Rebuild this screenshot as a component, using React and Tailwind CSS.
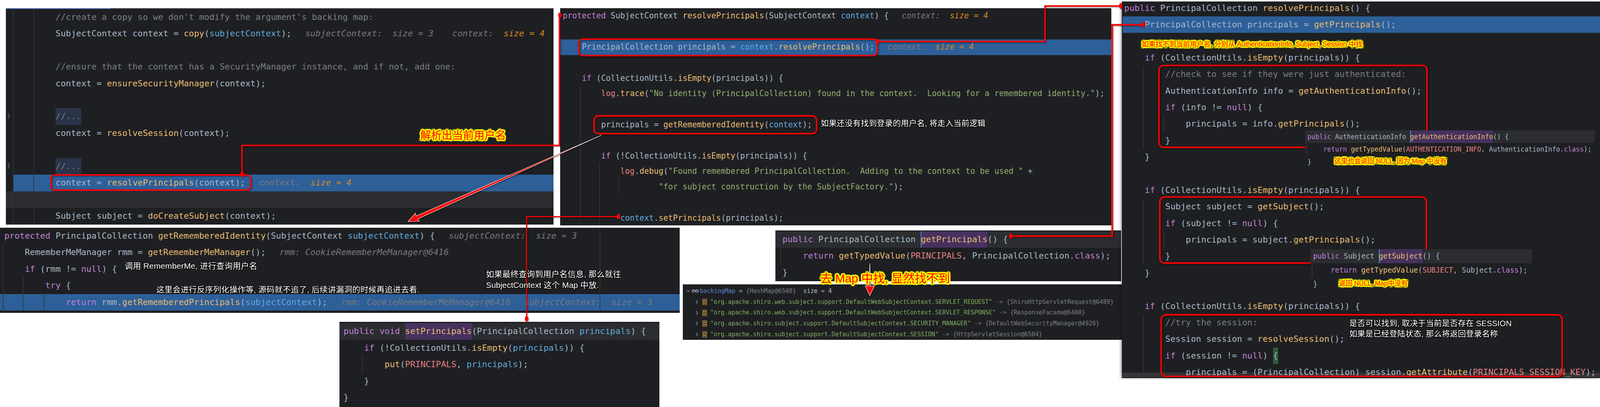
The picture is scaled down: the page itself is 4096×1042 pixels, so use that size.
import React from "react";
import { ChevronDown, ChevronRight } from "lucide-react";

// Screenshot collage of IDE snippets with red call arrows and notes.
// Drawing overlay uses the reference's own pixel coordinates (viewBox 7479x1903).

const KEYWORDS = new Set(["public", "protected", "void", "if", "return", "try", "null", "class"]);
const TOKEN = /("[^"]*"?)|(\/\/.*)|~([^~]*)~|\^([^^]*)\^|\|([^|]*)\||#([^#]*)#|&([^&]*)&|%([^%]*)%|@([^@]*)@|([A-Za-z_]\w*)|([^A-Za-z_"\/~^|#&%@]+|.)/g;

function tokens(text) {
  const out = [];
  let m;
  let i = 0;
  TOKEN.lastIndex = 0;
  while ((m = TOKEN.exec(text))) {
    const key = i++;
    if (m[1]) out.push(<span key={key} className="text-[#8fae6f]">{m[1]}</span>);
    else if (m[2]) out.push(<span key={key} className="text-[#7a7e85]">{m[2]}</span>);
    else if (m[3] !== undefined) out.push(<span key={key} className="text-[#5fa8dc]">{m[3]}</span>);
    else if (m[4] !== undefined) out.push(<span key={key} className="ml-[0.7ch] italic text-[#787a7e]">{m[4]}</span>);
    else if (m[5] !== undefined) out.push(<span key={key} className="italic text-[#d68a1e]">{m[5]}</span>);
    else if (m[6] !== undefined) out.push(<span key={key} className="inline-block h-[1lh] align-top bg-[#46315f] text-[#e8bb72] shadow-[inset_2px_0_0_#4a90d9]">{m[6]}</span>);
    else if (m[7] !== undefined) out.push(<span key={key} className="inline-block h-[1lh] align-top bg-[#46315f] text-[#e8bb72]">{m[7]}</span>);
    else if (m[8] !== undefined) out.push(<span key={key} className="inline-block h-[1lh] align-top bg-[#2a3349] text-[#7a7e85]">{m[8]}</span>);
    else if (m[9] !== undefined) out.push(<span key={key} className="inline-block h-[1lh] align-top bg-[#2f5a3f]">{m[9]}</span>);
    else if (m[10]) {
      const word = m[10];
      const next = text[m.index + word.length];
      if (KEYWORDS.has(word)) out.push(<span key={key} className="text-[#c07fd6]">{word}</span>);
      else if (next === "(") out.push(<span key={key} className="text-[#e8bb72]">{word}</span>);
      else if (word === "log" || /^[A-Z_]{3,}$/.test(word)) out.push(<span key={key} className="text-[#e57f80]">{word}</span>);
      else out.push(word);
    } else out.push(m[11]);
  }
  return out;
}

function L({ t = "", className = "" }) {
  return <div className={`h-[1lh] whitespace-pre ${className}`}>{tokens(t)}</div>;
}

const HL = "bg-[#2d5f99]";

function EntryIcon() {
  return (
    <svg width="12" height="16" viewBox="0 0 12 16" fill="none" stroke="#d9a441" strokeWidth="1.2" className="shrink-0">
      <rect x="0.8" y="0.8" width="10.4" height="3.6" rx="1" />
      <rect x="0.8" y="6.2" width="10.4" height="3.6" rx="1" />
      <rect x="0.8" y="11.6" width="10.4" height="3.6" rx="1" />
    </svg>
  );
}

function WatchIcon() {
  return (
    <svg width="19" height="8" viewBox="0 0 19 8" fill="none" stroke="#a3b1b8" strokeWidth="1.6" className="shrink-0">
      <circle cx="5" cy="4.2" r="3.2" />
      <circle cx="14" cy="4.2" r="3.2" />
      <path d="M1.4 3 Q5 0.6 9.5 2.6 Q14 0.6 17.6 3" />
    </svg>
  );
}

function DebugRow({ name, value }) {
  return (
    <div className="flex h-[27.7px] items-center whitespace-pre pl-[27px]">
      <ChevronRight size={18} strokeWidth={1.8} className="shrink-0 text-[#9a9da3]" />
      <span className="w-[5px] shrink-0" />
      <EntryIcon />
      <span className="ml-[7.7px] text-[#7fa860]">{name}</span>
      <span className="text-[#7a7e85]"> -&gt; {value}</span>
    </div>
  );
}

function Note({ className = "", children }) {
  return <div className={`absolute whitespace-pre leading-none [font-family:'Liberation_Sans','Noto_Sans_CJK_SC',sans-serif] ${className}`}>{children}</div>;
}

// halo around the note text, painted with offset shadows
const YELLOW = "text-[#ff0000] [text-shadow:4px_0_1px_#ff0,-4px_0_1px_#ff0,0_4px_1px_#ff0,0_-4px_1px_#ff0,3px_3px_1px_#ff0,-3px_3px_1px_#ff0,3px_-3px_1px_#ff0,-3px_-3px_1px_#ff0,2px_0_0_#ff0,-2px_0_0_#ff0,0_2px_0_#ff0,0_-2px_0_#ff0]";
const WHITE = "text-white [text-shadow:1.5px_0_0_#000,-1.5px_0_0_#000,0_1.5px_0_#000,0_-1.5px_0_#000,1.2px_1.2px_0_#000,-1.2px_1.2px_0_#000,1.2px_-1.2px_0_#000,-1.2px_-1.2px_0_#000]";

export default function App() {
  return (
    <div className="relative h-[1042px] w-[4096px] overflow-hidden bg-white text-[#a9b7c6] [font-family:'DejaVu_Sans_Mono','Noto_Sans_CJK_SC',monospace]">
      {/* SecurityManager createSubject */}
      <div className="absolute left-[15.3px] top-[20.8px] h-[554.3px] w-[1401.7px] overflow-hidden bg-[#1e1f22] text-[21.8px] leading-[42.45px] [&>div]:pl-[127px]">
        <div className="flex h-[2px] !pl-0">
          <div className="w-[268px] bg-[#4a6fb5]" />
          <div className="flex-1 bg-[#3c3f41]" />
        </div>
        <L t="//create a copy so we don't modify the argument's backing map:" />
        <L t="SubjectContext context = copy(~subjectContext~);  ^subjectContext:  size = 3^   ^context:^  |size = 4|" />
        <L />
        <L t="//ensure that the context has a SecurityManager instance, and if not, add one:" />
        <L t="context = ensureSecurityManager(context);" />
        <L />
        <L t="%//...%" />
        <L t="context = resolveSession(context);" />
        <L />
        <L t="%//...%" />
        <L className={`${HL} ml-[19px] !pl-[108px]`} t="context = resolvePrincipals(context);  ^context:^  |size = 4|" />
        <L className="bg-[#2b2d30]" />
        <L t="Subject subject = doCreateSubject(context);" />
      </div>

      {/* resolvePrincipals(SubjectContext) */}
      <div className="absolute left-[1433.9px] top-[21.4px] h-[555.4px] w-[1410.9px] overflow-hidden bg-[#1e1f22] text-[20.4px] leading-[39.8px] [&>div]:pl-[6.6px]">
        <L t="protected SubjectContext resolvePrincipals(SubjectContext ~context~) {  ^context:^  |size = 4|" />
        <L />
        <L className={HL} t="    PrincipalCollection principals = ~context~.resolvePrincipals();  ^context:^  |size = 4|" />
        <L />
        <L t="    if (CollectionUtils.isEmpty(principals)) {" />
        <L t='        log.trace("No identity (PrincipalCollection) found in the context.  Looking for a remembered identity.");' />
        <L />
        <L t="        principals = getRememberedIdentity(~context~);" />
        <L />
        <L t="        if (!CollectionUtils.isEmpty(principals)) {" />
        <L t={'            log.debug("Found remembered PrincipalCollection.  Adding to the context to be used " +'} />
        <L t={'                    "for subject construction by the SubjectFactory.");'} />
        <L />
        <L t="            ~context~.setPrincipals(principals);" />
      </div>

      {/* getRememberedIdentity */}
      <div className="absolute left-0 top-[582.7px] h-[218px] w-[1740px] overflow-hidden bg-[#1e1f22] text-[21.8px] leading-[42.5px] [&>div]:pl-[11px]">
        <L t="protected PrincipalCollection getRememberedIdentity(SubjectContext ~subjectContext~) {  ^subjectContext:  size = 3^" />
        <L t="    RememberMeManager rmm = getRememberMeManager();  ^rmm: CookieRememberMeManager@6416^" />
        <L t="    if (rmm != null) {" />
        <L t="        try {" />
        <L className={HL} t="            return rmm.getRememberedPrincipals(~subjectContext~);  ^rmm: CookieRememberMeManager@6416^  ^subjectContext:  size = 3^" />
      </div>

      {/* setPrincipals */}
      <div className="absolute left-[868.6px] top-[824.3px] h-[217.7px] w-[819.4px] overflow-hidden border-t-2 border-[#17181a] bg-[#1e1f22] pt-[1px] text-[21.8px] leading-[42.45px] [&>div]:pl-[11px]">
        <L className="bg-[#2b2d30]" t="public void &setPrincipals&(PrincipalCollection ~principals~) {" />
        <L t="    if (!CollectionUtils.isEmpty(~principals~)) {" />
        <L t="        put(PRINCIPALS, ~principals~);" />
        <L t="    }" />
        <L t="}" />
      </div>

      {/* getPrincipals */}
      <div className="absolute left-[1984.9px] top-[589.9px] h-[130.4px] w-[885.6px] overflow-hidden border-t-2 border-[#17181a] bg-[#1e1f22] text-[21.8px] leading-[42.45px] [&>div]:pl-[18px]">
        <L className="bg-[#2b2d30]" t="public PrincipalCollection #getPrincipals#() {" />
        <L t="    return getTypedValue(PRINCIPALS, PrincipalCollection.class);" />
        <L t="}" />
      </div>

      {/* debugger variables */}
      <div className="absolute left-[1748.2px] top-[728.4px] h-[141.3px] w-[1123.9px] overflow-hidden bg-[#1e1f22] pt-[3.2px] text-[15.2px]">
        <div className="flex h-[27.7px] items-center whitespace-pre pl-[6.5px]">
          <ChevronDown size={14} strokeWidth={2} className="shrink-0 text-[#9a9da3]" />
          <span className="w-[1.5px] shrink-0" />
          <WatchIcon />
          <span className="ml-[2px] text-[#5c83c9]">backingMap</span>
          <span className="text-[#a9b7c6]"> = </span>
          <span className="text-[#7a7e85]">{"{HashMap@6508}"}</span>
          <span className="text-[#bcbec4]">  size = 4</span>
        </div>
        <DebugRow name={'"org.apache.shiro.web.subject.support.DefaultWebSubjectContext.SERVLET_REQUEST"'} value="{ShiroHttpServletRequest@6489}" />
        <DebugRow name={'"org.apache.shiro.web.subject.support.DefaultWebSubjectContext.SERVLET_RESPONSE"'} value="{ResponseFacade@6400}" />
        <DebugRow name={'"org.apache.shiro.subject.support.DefaultSubjectContext.SECURITY_MANAGER"'} value="{DefaultWebSecurityManager@4926}" />
        <DebugRow name={'"org.apache.shiro.subject.support.DefaultSubjectContext.SESSION"'} value="{HttpServletSession@6504}" />
      </div>

      {/* resolvePrincipals() */}
      <div className="absolute left-[2872.1px] top-[4.4px] h-[964px] w-[1223.9px] overflow-hidden bg-[#1e1f22] text-[21.8px] leading-[42.4px] shadow-[-3px_0_6px_rgba(0,0,0,0.35)] [&>div]:pl-[6px]">
        <div className="mt-[-4.8px]">
          <L t="public PrincipalCollection resolvePrincipals() {" />
        </div>
        <L className={`${HL} ml-[2px] !pl-[4px]`} t="    PrincipalCollection principals = getPrincipals();" />
        <L />
        <L t="    if (CollectionUtils.isEmpty(principals)) {" />
        <L t="        //check to see if they were just authenticated:" />
        <L t="        AuthenticationInfo info = getAuthenticationInfo();" />
        <L t="        if (info != null) {" />
        <L t="            principals = info.getPrincipals();" />
        <L t="        }" />
        <L t="    }" />
        <L />
        <L t="    if (CollectionUtils.isEmpty(principals)) {" />
        <L t="        Subject subject = getSubject();" />
        <L t="        if (subject != null) {" />
        <L t="            principals = subject.getPrincipals();" />
        <L t="        }" />
        <L t="    }" />
        <L />
        <L t="    if (CollectionUtils.isEmpty(principals)) {" />
        <L t="        //try the session:" />
        <L t="        Session session = resolveSession();" />
        <L t="        if (session != null) @{@" />
        <L t="            principals = (PrincipalCollection) session.getAttribute(PRINCIPALS_SESSION_KEY);" />
        <div className="absolute bottom-[2px] left-0 right-0 h-[12px] !pl-0 bg-white/10" />
      </div>

      {/* guides, boxes and arrows, in reference pixels */}
      <svg className="absolute inset-0 h-full w-full" viewBox="0 0 7479 1903" fill="none">
        <g stroke="#35373b" strokeWidth="3">
          <path d="M61 38V1050M157 42V1050" />
          <path d="M2713 402V1053M2803 764V1053M2892 837V909" />
          <path d="M5345 309V697M5441 542V618M5345 929V1237M5441 1084V1160M5345 1472V1768M5441 1704V1768" />
          <path d="M14 1142V1462M108 1296V1451M204 1373V1451M2804 1064V1462" />
          <path d="M1694 1663V1740M3649 1157V1234" />
        </g>
        <path d="M36 530L44 543L36 556M36 762L44 775L36 788" stroke="#6e7074" strokeWidth="3" />

        <g stroke="#ff0000" strokeWidth="7" className="drop-shadow-[3px_3px_3px_rgba(0,0,0,0.5)]">
          <rect x="237" y="818" width="934" height="71" rx="20" />
          <rect x="2705" y="183" width="1396" height="77" rx="20" />
          <rect x="2777" y="542" width="1040" height="83" rx="20" />
          <rect x="5418" y="306" width="1253" height="383" rx="22" />
          <rect x="5422" y="921" width="1246" height="309" rx="22" />
          <rect x="5428" y="1472" width="1875" height="288" rx="22" />

          <path d="M1131 815V680H2615V71" />
          <path d="M4101 194H4885V28H5237" />
          <path d="M2891 1013H2461V1490" strokeWidth="5" />
          <path d="M4725 1104H5199V116H5345" />

          <g fill="#ff0000" strokeWidth="0">
            <ellipse cx="1131" cy="815" rx="8" ry="13" />
            <ellipse cx="2617" cy="71" rx="8" ry="13" />
            <ellipse cx="4101" cy="194" rx="8" ry="13" />
            <ellipse cx="5239" cy="28" rx="8" ry="13" />
            <ellipse cx="2891" cy="1013" rx="8" ry="13" />
            <ellipse cx="2461" cy="1490" rx="8" ry="13" />
            <ellipse cx="4725" cy="1104" rx="8" ry="13" />
            <ellipse cx="5345" cy="115" rx="8" ry="13" />
          </g>

          <path d="M2811 632L1952 1024L1960 1034L1907 1036L1941 997L1945 1010Z" fill="#ff0000" stroke="#ffffff" strokeWidth="2" />
          <path d="M4066 1232L4069 1337L4088 1337L4066 1382L4044 1337L4063 1337Z" fill="#ff0000" stroke="#ffffff" strokeWidth="2" />
        </g>
      </svg>

      {/* peek popups above the red boxes */}
      <div className="absolute left-[3341px] top-[333.6px] h-[94.8px] w-[741.6px] overflow-hidden bg-[#1e1f22] text-[16.8px] leading-[32.5px] [&>div]:pl-[6px]">
        <L className="bg-[#2b2d30]" t="public AuthenticationInfo #getAuthenticationInfo#() {" />
        <L t="    return getTypedValue(AUTHENTICATION_INFO, AuthenticationInfo.class);" />
        <L t="}" />
        <div className="absolute left-[2.7px] top-[32.3px] h-[31px] w-[2px] !pl-0 bg-[#35373b]" />
      </div>
      <div className="absolute left-[3354.6px] top-[638px] h-[107px] w-[567.4px] overflow-hidden bg-[#1e1f22] text-[18.6px] leading-[36.2px] [&>div]:pl-[7px]">
        <L className="bg-[#2b2d30]" t="public Subject #getSubject#() {" />
        <L t="    return getTypedValue(SUBJECT, Subject.class);" />
        <L t="}" />
        <div className="absolute left-[3.3px] top-[36px] h-[36px] w-[2px] !pl-0 bg-[#35373b]" />
      </div>

      {/* notes */}
      <Note className={`left-[1076px] top-[333px] text-[27.4px] ${YELLOW}`}>解析出当前用户名</Note>
      <Note className={`left-[2101px] top-[306px] text-[20.5px] ${WHITE}`}>如果还没有找到登录的用户名, 将走入当前逻辑</Note>
      <Note className={`left-[2923px] top-[105px] text-[17.6px] ${YELLOW}`}>如果找不到当前用户名, 分别从 AuthenticationInfo, Subject, Session 中找</Note>
      <Note className={`left-[3416px] top-[404px] text-[17px] ${YELLOW}`}>这里也会返回 NULL, 因为 Map 中没有</Note>
      <Note className={`left-[3428px] top-[717px] text-[17px] ${YELLOW}`}>返回 NULL, Map中没有</Note>
      <Note className={`left-[3454px] top-[818px] text-[20.5px] ${WHITE}`}>是否可以找到, 取决于当前是否存在 SESSION</Note>
      <Note className={`left-[3454px] top-[845px] text-[20.5px] ${WHITE}`}>如果是已经登陆状态, 那么将返回登录名称</Note>
      <Note className={`left-[319px] top-[670px] text-[21px] ${WHITE}`}>调用 RememberMe, 进行查询用户名</Note>
      <Note className={`left-[400px] top-[731.7px] text-[20.8px] ${WHITE}`}>这里会进行反序列化操作等, 源码就不追了, 后续讲漏洞的时候再追进去看.</Note>
      <Note className={`left-[1244px] top-[691.6px] text-[20.9px] ${WHITE}`}>如果最终查询到用户名信息, 那么就往</Note>
      <Note className={`left-[1244px] top-[719.6px] text-[20.9px] ${WHITE}`}>SubjectContext 这个 Map 中放.</Note>
      <Note className={`left-[2100px] top-[698px] text-[30px] ${YELLOW}`}>去 Map 中找, 显然找不到</Note>
    </div>
  );
}
